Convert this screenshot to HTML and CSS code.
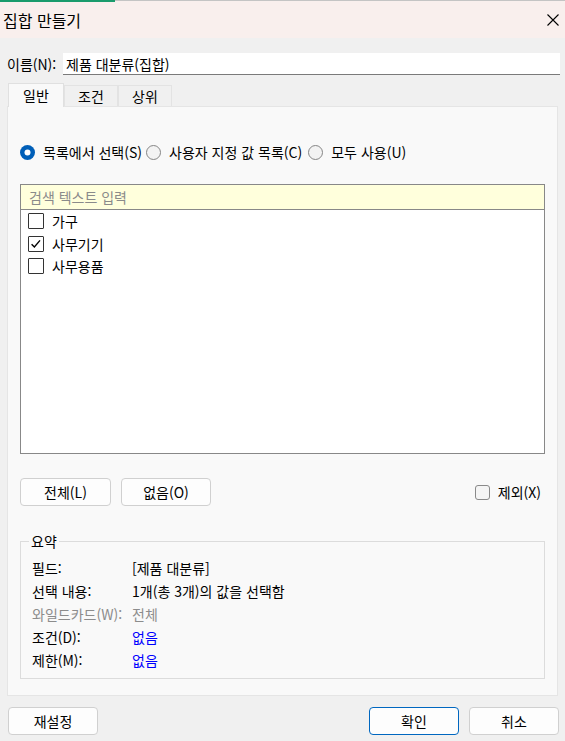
FILE: index.html
```html
<!DOCTYPE html>
<html lang="ko">
<head>
<meta charset="utf-8">
<link rel="stylesheet" href="styles.css">
</head>
<body>
<div class="topline"><div class="accent"></div><div class="rest"></div></div>
<div class="titlebar">
  <span class="title">집합 만들기</span>
  <svg class="close" width="12" height="12" viewBox="0 0 12 12"><path d="M0.5 0.5 L11.5 11.5 M11.5 0.5 L0.5 11.5" stroke="#000" stroke-width="1.1" fill="none"/></svg>
</div>
<div class="namerow">
  <span class="namelabel">이름(N):</span>
  <div class="nameinput">제품 대분류(집합)</div>
</div>
<div class="tabs">
  <div class="tab active">일반</div>
  <div class="tab">조건</div>
  <div class="tab">상위</div>
</div>
<div class="panel">
  <div class="radios">
    <div class="radio r1">
      <svg width="15" height="15" viewBox="0 0 15 15"><circle cx="7.5" cy="7.5" r="7.5" fill="#005fb8"/><circle cx="7.5" cy="7.5" r="3" fill="#fff"/></svg>
      <span>목록에서 선택(S)</span>
    </div>
    <div class="radio r2">
      <svg width="15" height="15" viewBox="0 0 15 15"><circle cx="7.5" cy="7.5" r="7" fill="#f3f3f3" stroke="#858585" stroke-width="1"/></svg>
      <span>사용자 지정 값 목록(C)</span>
    </div>
    <div class="radio r3">
      <svg width="15" height="15" viewBox="0 0 15 15"><circle cx="7.5" cy="7.5" r="7" fill="#f3f3f3" stroke="#858585" stroke-width="1"/></svg>
      <span>모두 사용(U)</span>
    </div>
  </div>
  <div class="listbox">
    <div class="search">검색 텍스트 입력</div>
    <div class="items">
      <div class="item"><span class="cb"></span><span>가구</span></div>
      <div class="item"><span class="cb"><svg width="14" height="14" viewBox="0 0 14 14"><path d="M2.6 7.2 L5.4 10 L11 3.4" stroke="#000" stroke-width="1.4" fill="none"/></svg></span><span>사무기기</span></div>
      <div class="item"><span class="cb"></span><span>사무용품</span></div>
    </div>
  </div>
  <div class="btnrow">
    <button class="btn">전체(L)</button>
    <button class="btn">없음(O)</button>
    <div class="spacer"></div>
    <div class="exclude"><span class="cb2"></span><span>제외(X)</span></div>
  </div>
  <fieldset class="summary">
    <legend>요약</legend>
    <div class="srow"><span class="slabel">필드:</span><span>[제품 대분류]</span></div>
    <div class="srow"><span class="slabel">선택 내용:</span><span>1개(총 3개)의 값을 선택함</span></div>
    <div class="srow muted"><span class="slabel">와일드카드(W):</span><span>전체</span></div>
    <div class="srow"><span class="slabel">조건(D):</span><span class="link">없음</span></div>
    <div class="srow"><span class="slabel">제한(M):</span><span class="link">없음</span></div>
  </fieldset>
</div>
<div class="footer">
  <button class="btn">재설정</button>
  <div class="spacer"></div>
  <button class="btn primary">확인</button>
  <button class="btn">취소</button>
</div>
</body>
</html>
```
FILE: styles.css
```css
html, body {
  margin: 0;
  padding: 0;
}
body {
  background: #f0f0f0;
  font-family: "Noto Sans CJK KR", "Noto Sans", sans-serif;
  font-size: 14px;
  color: #000;
  width: 565px;
  height: 741px;
  overflow: hidden;
}
.topline {
  display: flex;
  height: 2px;
}
.accent {
  width: 115px;
  background: #1a9b6c;
}
.rest {
  flex: 1;
  border-top: 1px solid #c4c4c4;
  background: #f9efed;
}
.titlebar {
  height: 36px;
  background: #f9efed;
  display: flex;
  align-items: center;
  justify-content: space-between;
  padding: 0 6px 0 3px;
}
.title {
  font-size: 16px;
  line-height: 18px;
}
.namerow {
  display: flex;
  align-items: center;
  margin-top: 15px;
  padding: 0 5px 0 7px;
  height: 22px;
}
.namelabel {
  width: 56px;
  line-height: 18px;
}
.nameinput {
  flex: 1;
  height: 22px;
  box-sizing: border-box;
  background: #fff;
  border-bottom: 1px solid #7a7a7a;
  padding-left: 3px;
  display: flex;
  align-items: center;
}
.tabs {
  display: flex;
  align-items: flex-end;
  margin: 8px 0 0 8px;
  height: 23px;
}
.tab {
  width: 54px;
  height: 21px;
  box-sizing: border-box;
  border: 1px solid #e3e3e3;
  border-bottom: none;
  background: #f0f0f0;
  display: flex;
  align-items: center;
  justify-content: center;
}
.tab.active {
  width: 56px;
  height: 24px;
  margin-bottom: -1px;
  background: #f9f9f9;
  border-color: #e0e0e0;
  position: relative;
  z-index: 1;
  padding-bottom: 2px;
}
.panel {
  margin: 0 7px;
  height: 590px;
  box-sizing: border-box;
  border: 1px solid #e5e5e5;
  background: #f9f9f9;
  padding: 0 12px;
}
.radios {
  display: flex;
  align-items: center;
  height: 22px;
  margin-top: 34px;
}
.radio {
  display: flex;
  align-items: center;
}
.radio svg {
  margin-right: 8px;
  flex: none;
}
.r1 {
  margin-right: 4px;
}
.r2 {
  margin-right: 6px;
}
.listbox {
  margin-top: 21px;
  height: 270px;
  box-sizing: border-box;
  border: 1px solid #888;
  background: #fff;
}
.search {
  height: 25px;
  box-sizing: border-box;
  border-bottom: 1px solid #888;
  background: #ffffdc;
  color: #8a8a8a;
  padding-left: 8px;
  display: flex;
  align-items: center;
}
.items {
  padding: 0 0 0 7px;
}
.item {
  height: 22.5px;
  display: flex;
  align-items: center;
}
.cb {
  width: 16px;
  height: 16px;
  box-sizing: border-box;
  border: 1px solid #333;
  border-radius: 1px;
  background: #fff;
  margin-right: 8px;
  display: flex;
  align-items: center;
  justify-content: center;
}
.btnrow {
  display: flex;
  align-items: center;
  margin-top: 24px;
  height: 28px;
}
.btn {
  width: 91px;
  height: 28px;
  box-sizing: border-box;
  border: 1px solid #d0d0d0;
  border-radius: 4px;
  background: #fdfdfd;
  font-family: inherit;
  font-size: 14px;
  color: #000;
  padding: 0;
  margin: 0 10px 0 0;
}
.btnrow .btn:nth-child(2) {
  width: 90px;
}
.spacer {
  flex: 1;
}
.exclude {
  display: flex;
  align-items: center;
  margin-right: 4px;
}
.cb2 {
  width: 15px;
  height: 15px;
  box-sizing: border-box;
  border: 1px solid #8a8a8a;
  border-radius: 3px;
  background: #f5f5f5;
  margin-right: 8px;
}
.summary {
  margin: 26px 0 0 0;
  padding: 0 8px 7px 8px;
  border: 1px solid #dcdcdc;
  min-width: 0;
}
.summary legend {
  padding: 0 2px;
  line-height: 18px;
  height: 18px;
}
.srow {
  display: flex;
  align-items: center;
  height: 23px;
  padding-left: 3px;
}
.srow:first-of-type {
  margin-top: 6px;
}
.slabel {
  width: 100px;
}
.muted {
  color: #8c8c8c;
}
.link {
  color: #0000ff;
}
.footer {
  display: flex;
  align-items: center;
  margin-top: 11px;
  padding: 0 6px 0 8px;
  height: 28px;
}
.footer .btn {
  width: 90px;
  margin: 0;
}
.footer .primary {
  border-color: #0067c0;
  margin-right: 10px;
}
```
